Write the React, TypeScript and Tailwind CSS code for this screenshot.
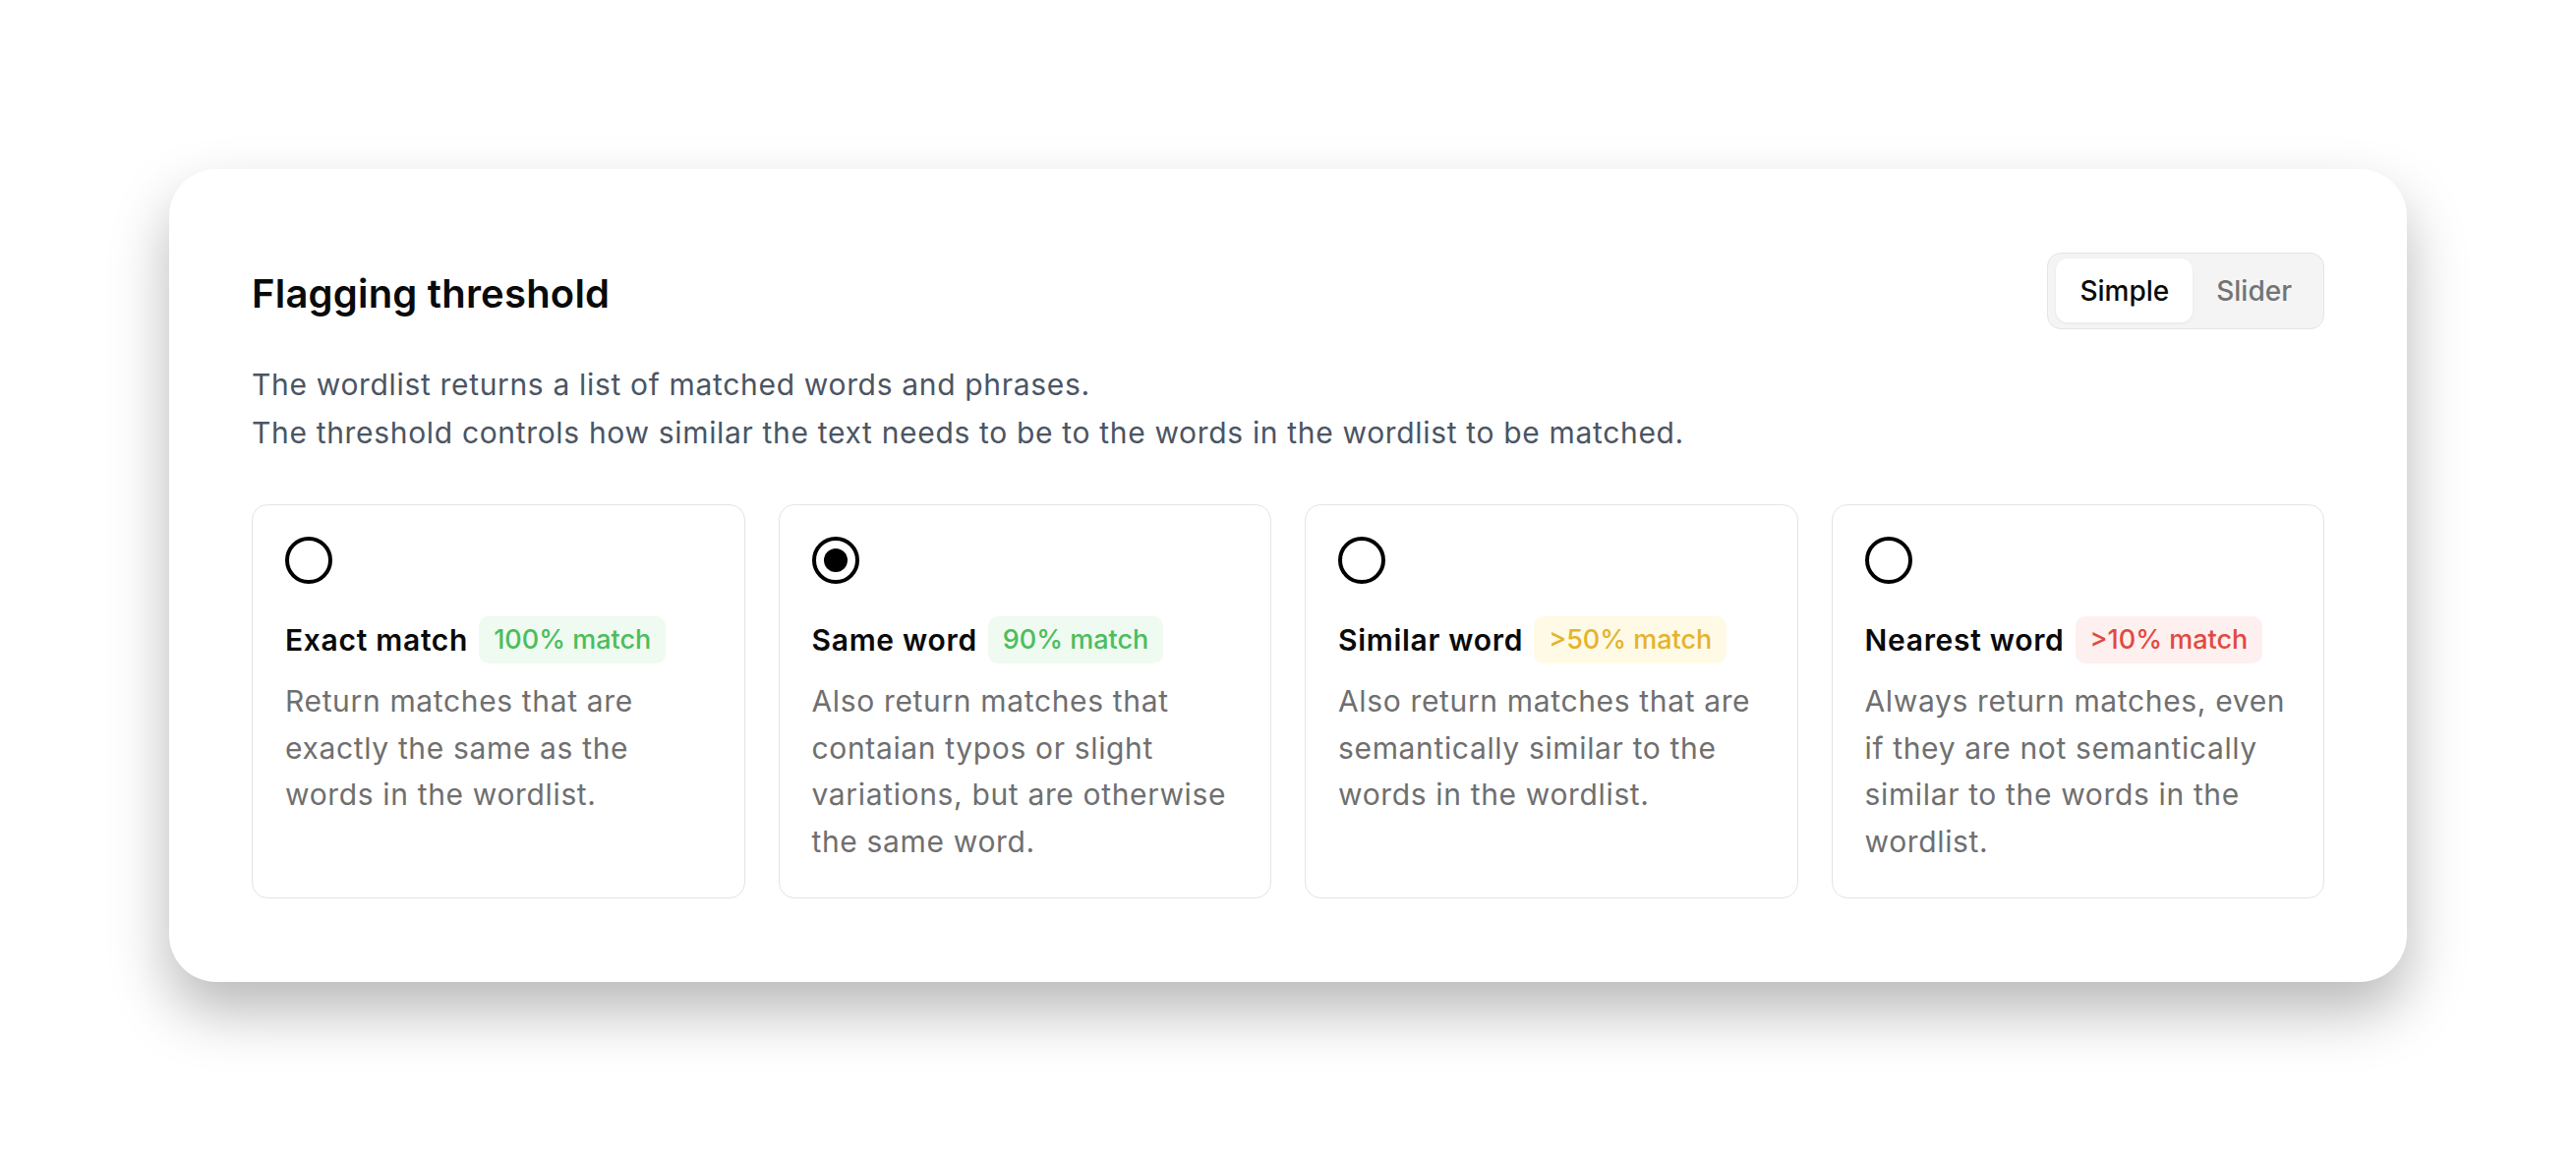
import { useState } from "react";

type Level = "exact" | "same" | "similar" | "nearest";

interface Option {
  id: Level;
  title: string;
  badge: string;
  badgeClass: string;
  description: string;
}

const options: Option[] = [
  {
    id: "exact",
    title: "Exact match",
    badge: "100% match",
    badgeClass: "bg-[#effaf1] text-[#4cbd5c]",
    description: "Return matches that are exactly the same as the words in the wordlist.",
  },
  {
    id: "same",
    title: "Same word",
    badge: "90% match",
    badgeClass: "bg-[#effaf1] text-[#4cbd5c]",
    description:
      "Also return matches that contaian typos or slight variations, but are otherwise the same word.",
  },
  {
    id: "similar",
    title: "Similar word",
    badge: ">50% match",
    badgeClass: "bg-[#fefae6] text-[#e5b32c]",
    description: "Also return matches that are semantically similar to the words in the wordlist.",
  },
  {
    id: "nearest",
    title: "Nearest word",
    badge: ">10% match",
    badgeClass: "bg-[#fdf0ef] text-[#e04a41]",
    description:
      "Always return matches, even if they are not semantically similar to the words in the wordlist.",
  },
];

function Radio({ checked }: { checked: boolean }) {
  return (
    <span className="flex h-[48px] w-[48px] items-center justify-center rounded-full border-[4px] border-black">
      {checked && <span className="h-[24px] w-[24px] rounded-full bg-black" />}
    </span>
  );
}

function ModeToggle() {
  const [mode, setMode] = useState<"simple" | "slider">("simple");

  return (
    <div className="flex rounded-[14px] border-[1.5px] border-[#e4e4e7] bg-[#f4f4f5] px-[8px] py-[5.5px]">
      {(["simple", "slider"] as const).map((m) => (
        <button
          key={m}
          type="button"
          onClick={() => setMode(m)}
          className={
            mode === m
              ? "h-[65px] rounded-[12px] bg-white px-[24px] text-[28px] font-medium text-[#0a0a0a] shadow-[0_1px_3px_rgba(0,0,0,0.06)]"
              : "h-[65px] rounded-[12px] px-[24px] text-[28px] font-medium text-[#737373]"
          }
        >
          {m === "simple" ? "Simple" : "Slider"}
        </button>
      ))}
    </div>
  );
}

export default function App() {
  const [selected, setSelected] = useState<Level>("same");

  return (
    <div className="flex min-h-screen justify-center bg-white pt-[172px] font-['Inter',sans-serif] antialiased">
      <div className="h-fit w-[2276px] rounded-[48px] bg-white px-[84px] pb-[85px] pt-[84px] shadow-[0_30px_60px_rgba(0,0,0,0.28)]">
        <div className="flex h-[79px] items-center justify-between">
          <h2 className="mt-[6px] text-[40px] font-semibold tracking-[0.2px] text-[#0a0a0a]">Flagging threshold</h2>
          <ModeToggle />
        </div>

        <p className="mt-[32px] text-[30px] leading-[48.5px] tracking-[0.67px] text-[#4b5563]">
          The wordlist returns a list of matched words and phrases.
          <br />
          The threshold controls how similar the text needs to be to the words in the wordlist to be matched.
        </p>

        <div className="mt-[49px] grid grid-cols-4 gap-[34px]">
          {options.map((opt) => (
            <label
              key={opt.id}
              onClick={() => setSelected(opt.id)}
              className="flex cursor-pointer flex-col rounded-[16px] border-[1.5px] border-[#e4e4e7] px-[33px] pb-[33px] pt-[32px]"
            >
              <Radio checked={selected === opt.id} />
              <div className="mt-[33px] flex items-center gap-[11px]">
                <span className="text-[30px] font-semibold tracking-[0.7px] text-[#0a0a0a]">{opt.title}</span>
                <span className={`flex h-[48px] items-center rounded-[10px] px-[15px] text-[27px] font-medium ${opt.badgeClass}`}>
                  {opt.badge}
                </span>
              </div>
              <p className="mt-[15px] text-[30px] leading-[47.5px] tracking-[0.65px] text-[#6f6f6f]">{opt.description}</p>
            </label>
          ))}
        </div>
      </div>
    </div>
  );
}
